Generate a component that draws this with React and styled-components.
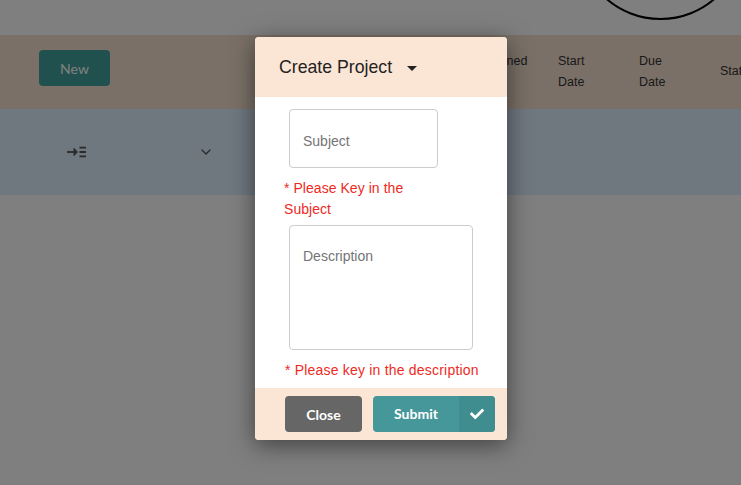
import React from "react";
import styled, { createGlobalStyle } from "styled-components";
import { ChevronDown } from "lucide-react";
import { FaCheck } from "react-icons/fa";

const GlobalStyle = createGlobalStyle`
  html, body {
    margin: 0;
    padding: 0;
    height: 100%;
    overflow: hidden;
    background: #fff;
    font-family: "Liberation Sans", Arial, sans-serif;
  }
  * { box-sizing: border-box; }
`;

const Page = styled.div`
  position: relative;
  width: 741px;
  height: 485px;
  overflow: hidden;
  padding-top: 35px;
`;

const Logo = styled.div`
  position: absolute;
  left: 577px;
  top: -147px;
  width: 167px;
  height: 167px;
  border: 2px solid #000;
  border-radius: 50%;
`;

const HeaderBand = styled.div`
  height: 74px;
  background: #f5e0ce;
  display: flex;
  align-items: center;
  padding-left: 39px;
  white-space: nowrap;
  overflow: hidden;
`;

const NewButton = styled.button`
  width: 71px;
  height: 36px;
  margin-top: -8px;
  margin-right: 366px;
  padding: 0;
  flex: none;
  border: none;
  border-radius: 4px;
  background: #42a29e;
  color: #fff;
  font-family: Lato, sans-serif;
  font-size: 14px;
  font-weight: 400;
`;

const HeadCell = styled.div`
  flex: none;
  width: ${({ $w }) => $w}px;
  color: #333;
  font-size: 12.5px;
  line-height: 21.5px;
`;

const BodyBand = styled.div`
  height: 86px;
  background: #deeeff;
  display: flex;
  align-items: center;
  padding-left: 67px;
  color: #555;
`;

const IndentSlot = styled.div`
  width: 131px;
  display: flex;
`;

const Overlay = styled.div`
  position: absolute;
  inset: 0;
  background: rgba(0, 0, 0, 0.5);
`;

const Modal = styled.div`
  position: absolute;
  left: 255px;
  top: 37px;
  width: 252px;
  height: 403px;
  display: flex;
  flex-direction: column;
  background: #fff;
  border-radius: 4px;
  overflow: hidden;
  box-shadow: 0 5px 25px rgba(0, 0, 0, 0.5);
`;

const ModalHeader = styled.div`
  height: 60px;
  flex: none;
  display: flex;
  align-items: center;
  gap: 15px;
  padding-left: 24px;
  background: #fbe5d4;
  color: #222;
  font-size: 17.7px;
`;

const Caret = styled.span`
  width: 0;
  height: 0;
  margin-top: 2px;
  border-left: 5px solid transparent;
  border-right: 5px solid transparent;
  border-top: 5px solid #222;
`;

const ModalBody = styled.div`
  flex: 1;
  display: flex;
  flex-direction: column;
  align-items: flex-start;
  padding: 12px 0 0 34px;
`;

const SubjectInput = styled.input`
  width: 149px;
  height: 59px;
  padding: 5px 13px 0;
  border: 1px solid #ccc;
  border-radius: 4px;
  background: #fff;
  font-family: "Liberation Sans", Arial, sans-serif;
  font-size: 14px;
`;

const DescriptionInput = styled.textarea`
  display: block;
  width: 184px;
  height: 125px;
  margin-top: 5px;
  padding: 22px 13px 0;
  border: 1px solid #ccc;
  border-radius: 4px;
  background: #fff;
  resize: none;
  font-family: "Liberation Sans", Arial, sans-serif;
  font-size: 14px;
  line-height: 16px;
`;

const ErrorText = styled.div`
  width: ${({ $w }) => $w}px;
  margin-left: ${({ $ml }) => $ml}px;
  margin-top: 10px;
  color: #ee2a1e;
  font-size: 14px;
  line-height: 21px;
  letter-spacing: ${({ $ls }) => $ls}px;
  white-space: ${({ $nowrap }) => ($nowrap ? "nowrap" : "normal")};
`;

const ModalFooter = styled.div`
  height: 52px;
  flex: none;
  display: flex;
  align-items: center;
  gap: 11px;
  padding-left: 30px;
  background: #fbe5d4;
`;

const CloseButton = styled.button`
  width: 77px;
  height: 36px;
  border: none;
  border-radius: 4px;
  background: #666;
  color: #fff;
  font-family: Lato, sans-serif;
  font-size: 14px;
  font-weight: 700;
`;

const SubmitButton = styled.button`
  width: 122px;
  height: 36px;
  padding: 0;
  border: none;
  border-radius: 4px;
  overflow: hidden;
  display: flex;
  background: #46979a;
  color: #fff;
  font-family: Lato, sans-serif;
  font-size: 14px;
  font-weight: 700;
`;

const SubmitLabel = styled.span`
  flex: 1;
  line-height: 36px;
  text-align: center;
`;

const SubmitIcon = styled.span`
  width: 36px;
  display: flex;
  align-items: center;
  justify-content: center;
  background: #3f8d8f;
  font-size: 14px;
`;

function IndentIcon() {
  return (
    <svg width="20" height="12" viewBox="0 0 20 12" fill="none" stroke="currentColor" strokeWidth="1.8">
      <path d="M0 6h9" />
      <path d="M7 2.4 10.4 6 7 9.6Z" fill="currentColor" strokeWidth="1" />
      <path d="M12.5 1.6h6.5M12.5 6h6.5M12.5 10.4h6.5" />
    </svg>
  );
}

export default function App() {
  return (
    <Page>
      <GlobalStyle />
      <Logo />
      <HeaderBand>
        <NewButton>New</NewButton>
        <HeadCell $w={82}>
          Assigned
          <br />
          To
        </HeadCell>
        <HeadCell $w={81}>
          Start
          <br />
          Date
        </HeadCell>
        <HeadCell $w={81}>
          Due
          <br />
          Date
        </HeadCell>
        <HeadCell $w={60}>Status</HeadCell>
      </HeaderBand>
      <BodyBand>
        <IndentSlot>
          <IndentIcon />
        </IndentSlot>
        <ChevronDown size={16} strokeWidth={2} />
      </BodyBand>
      <Overlay />
      <Modal>
        <ModalHeader>
          Create Project
          <Caret />
        </ModalHeader>
        <ModalBody>
          <SubjectInput placeholder="Subject" />
          <ErrorText $w={140} $ml={-5} $ls={0.05}>
            * Please Key in the Subject
          </ErrorText>
          <DescriptionInput placeholder="Description" />
          <ErrorText $w={210} $ml={-4} $ls={0.2} $nowrap>
            * Please key in the description
          </ErrorText>
        </ModalBody>
        <ModalFooter>
          <CloseButton>Close</CloseButton>
          <SubmitButton>
            <SubmitLabel>Submit</SubmitLabel>
            <SubmitIcon>
              <FaCheck />
            </SubmitIcon>
          </SubmitButton>
        </ModalFooter>
      </Modal>
    </Page>
  );
}
